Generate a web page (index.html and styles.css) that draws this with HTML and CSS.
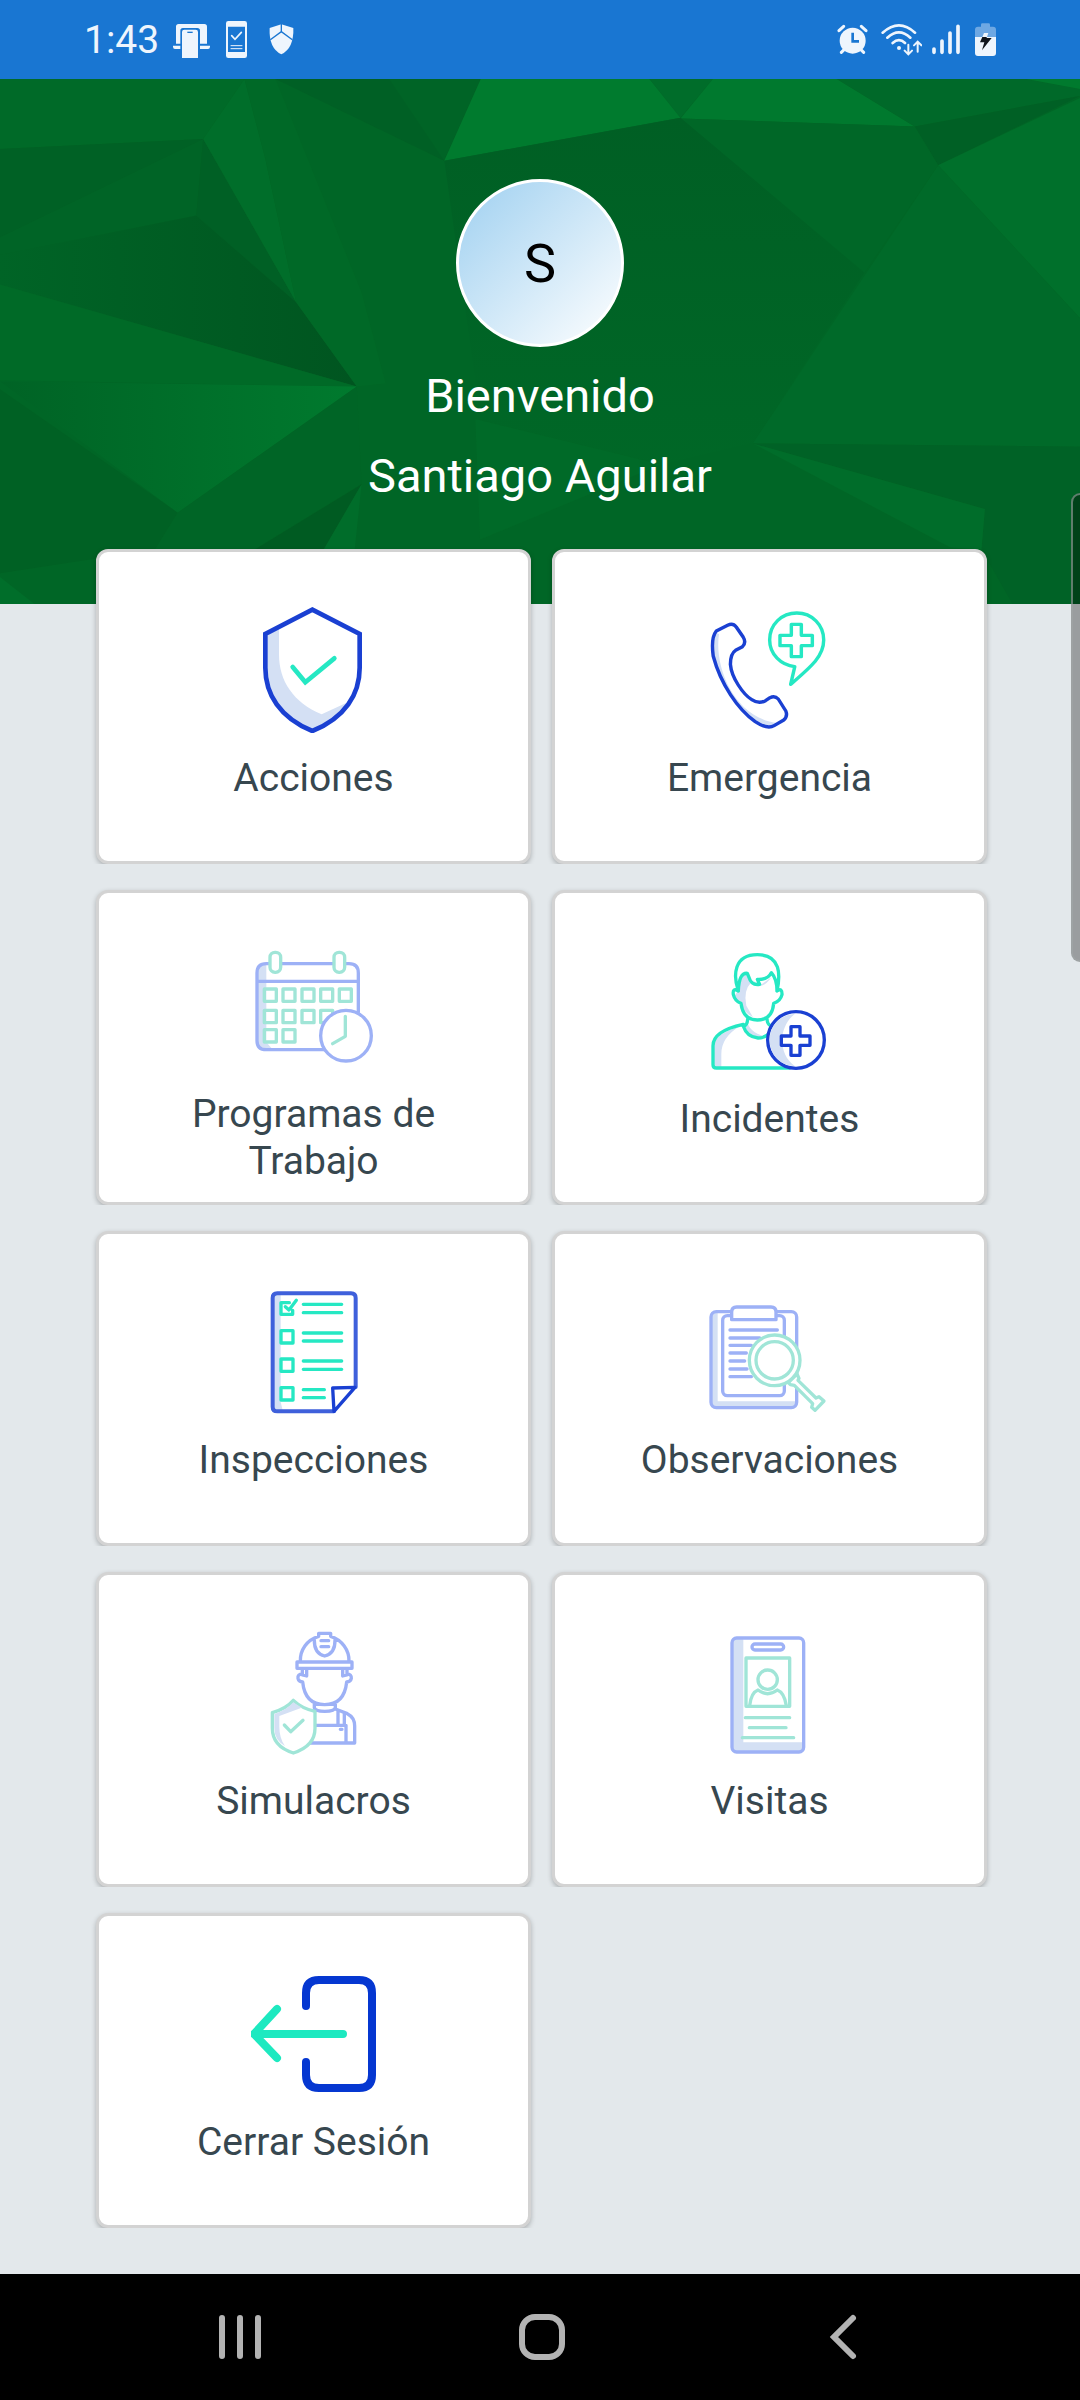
FILE: index.html
```
<!DOCTYPE html>
<html lang="es">
<head>
  <meta charset="UTF-8" />
  <meta name="viewport" content="width=device-width, initial-scale=1.0"/>
  <title>Menú principal</title>
  <link rel="stylesheet" href="styles.css">
</head>
<body>

  <div class="status-bar">
    <div class="status-left">
      <span class="time">1:43</span>
      <svg width="37" height="40" viewBox="336 60 111 120">
        <path class="fill" d="M345 131V80Q345 72 353 72H430Q438 72 438 80V131H417V92Q417 84 409 84H366Q358 84 358 92V131ZM336 137H358V147H342Q336 147 336 140ZM417 137H447V140Q447 147 441 147H417ZM363 174V96Q363 89 370 89H404Q411 89 411 96V174Z"/>
        <path class="cut" d="M379 97H395"/>
      </svg>
      <svg width="30" height="40" viewBox="495 60 90 120">
        <path class="fill" fill-rule="evenodd" d="M508 63H557Q564 63 564 70V167Q564 174 557 174H508Q501 174 501 167V70Q501 63 508 63ZM507 80V156H558V80Z"/>
        <path class="line" stroke-width="5" d="M518 107L528 118L547 97"/>
        <path class="line" stroke-width="3" d="M516 137H549M516 146H549"/>
      </svg>
      <svg width="26" height="40" viewBox="633 60 78 120">
        <path class="fill" d="M673 73L709 84Q711 145 673 163Q635 145 638 84Z"/>
        <path class="cut" d="M673 72V95M640 119L673 95L706 119"/>
      </svg>
    </div>
    <div class="status-right">
      <svg width="33" height="40" viewBox="51 60 99 120">
        <circle class="fill" cx="98" cy="122" r="39"/>
        <path class="line" stroke-width="9" d="M57 92L71 79M138 92L124 79M64 157L73 148M131 157L122 148"/>
        <path class="cut thick-cut" d="M98 98V124H117"/>
      </svg>
      <svg width="43" height="40" viewBox="177 60 129 120">
        <path class="line" stroke-width="8" d="M188 98Q237 54 285 98M202 113Q237 81 271 113M218 129Q237 112 255 129"/>
        <circle class="fill" cx="237" cy="144" r="6"/>
        <path class="line" stroke-width="6" d="M265 134V162M254 152L265 163L276 152M293 155V126M282 136L293 125L304 136"/>
      </svg>
      <svg width="30" height="40" viewBox="333 60 90 120">
        <path class="line" stroke-width="11" d="M342 147V157M366 123V157M390 99V157M414 79V157"/>
      </svg>
      <svg width="30" height="40" viewBox="450 60 90 120">
        <path class="fill dim" d="M483 80V74Q483 70 487 70H506Q510 70 510 74V80H519Q528 80 528 89V111H465V89Q465 80 474 80Z"/>
        <path class="fill" d="M465 111H528V159Q528 168 519 168H474Q465 168 465 159ZM492 99H505L501 111H487Z"/>
        <path d="M487 111H501L499 114H515L486 151L493 127H480Z" fill="#10151c"/>
      </svg>
    </div>
  </div>

  <header class="hero">
    <svg class="hero-bg" viewBox="0 200 1568 1328" preserveAspectRatio="none">
      <defs>
        <linearGradient id="glow"><stop offset="0" stop-color="#006325"/><stop offset="1" stop-color="#007a2e"/></linearGradient>
        <linearGradient id="deep"><stop offset="0" stop-color="#006426"/><stop offset="1" stop-color="#005520"/></linearGradient>
        <linearGradient id="mid" x1="0" y1="0" x2="0" y2="1"><stop offset="0" stop-color="#005f24"/><stop offset="1" stop-color="#006927"/></linearGradient>
      </defs>
      <rect x="0" y="200" width="1568" height="1328" fill="#006626"/>
      <polygon points="0,200 355,200 295,352 0,377" fill="#006a28"/>
      <polygon points="0,377 295,352 285,545 0,645" fill="#006125"/>
      <polygon points="0,600 295,352 285,545 0,645" fill="#006426"/>
      <polygon points="295,352 430,765 285,545" fill="#006025"/>
      <polygon points="0,645 285,545 430,765 518,978 0,720" fill="url(#deep)"/>
      <polygon points="0,720 518,978 0,962" fill="#006a27"/>
      <polygon points="0,965 518,978 258,1297" fill="url(#glow)"/>
      <polygon points="0,985 258,1297 225,1390 0,1450" fill="#006124"/>
      <polygon points="0,1460 50,1528 0,1528" fill="#006e2a"/>
      <polygon points="258,1297 225,1390 370,1390 525,1225 518,978" fill="#006526"/>
      <polygon points="525,1225 370,1390 470,1390" fill="#005b22"/>
      <polygon points="525,1225 470,1390 515,1390" fill="#006d2a"/>
      <polygon points="295,352 355,200 385,400 430,765" fill="#006e2a"/>
      <polygon points="355,200 400,200 525,740 560,970 518,978 430,765 385,400" fill="#006927"/>
      <polygon points="400,200 698,200 645,407" fill="#006025"/>
      <polygon points="565,200 698,200 645,407" fill="#006426"/>
      <polygon points="698,200 943,200 988,298 645,407" fill="#007b2e"/>
      <polygon points="943,200 1035,200 988,298" fill="#006d2a"/>
      <polygon points="1035,200 1215,200 1328,320 988,300" fill="#00792e"/>
      <polygon points="1215,200 1490,200 1568,225 1568,243 1328,320" fill="#006929"/>
      <polygon points="1490,200 1568,200 1568,225" fill="#007a2e"/>
      <polygon points="1328,320 1568,243 1362,418" fill="#006025"/>
      <polygon points="1362,418 1568,248 1568,805" fill="#00702b"/>
      <polygon points="988,300 1328,320 1362,418 1255,690" fill="#006727"/>
      <polygon points="645,407 988,298 1255,690 1093,1120 960,1175 697,1365 690,960" fill="url(#mid)"/>
      <polygon points="697,1365 690,1060 960,1175" fill="#006a28"/>
      <polygon points="1362,418 1568,805 1568,1130 1093,1122" fill="#006a29"/>
      <polygon points="1093,1122 1568,1130 1568,1528 1470,1528 1425,1390 1430,1288" fill="#006226"/>
      <polygon points="1093,1122 1430,1288 1425,1390 1380,1385" fill="#006d2a"/>
    </svg>
    <div class="avatar">S</div>
    <p class="greeting">Bienvenido</p>
    <h1 class="user-name">Santiago Aguilar</h1>
  </header>

  <main class="menu">
    <button class="card">
      <svg class="icon thick" viewBox="513 228 378 378">
        <path class="shade" d="M556 308L597 295V370C597 450 640 515 725 550L800 515Q770 570 697 600C600 560 556 490 556 410Z"/>
        <path class="blue" d="M697 236L839 309V410C839 490 795 560 697 600C600 560 556 490 556 410V309Z"/>
        <path class="teal" d="M638 408L676 454L763 382"/>
      </svg>
      <span class="label">Acciones</span>
    </button>

    <button class="card">
      <svg class="icon" viewBox="485 228 366 378" preserveAspectRatio="none">
        <path class="shade" d="M502 320Q512 300 520 310C505 400 560 560 690 576Q660 600 625 572C575 535 525 460 503 375Z"/>
        <path class="blue" d="M512 300L545 283Q560 275 570 288L590 318Q600 335 588 347L568 358Q553 368 553 400C556 440 590 490 615 506Q635 520 655 509L668 500Q682 493 692 504L714 540Q720 556 708 567L680 584Q660 596 625 572C575 535 525 460 503 375Q496 320 512 300Z"/>
        <path class="teal" d="M740 407C700 403 667 370 667 327C667 280 702 246 746 246C790 246 824 282 824 327C824 375 790 405 728 460Z"/>
        <path class="teal" d="M730 280H759V313H791V344H759V377H730V344H697V313H730Z"/>
      </svg>
      <span class="label">Emergencia</span>
    </button>

    <button class="card">
      <svg class="icon faded" viewBox="64 52 378 363">
        <path class="shade" d="M84 105L110 100V335L125 352H100L84 340Z"/>
        <path class="blue" d="M285 357H110Q82 357 82 330V127Q82 99 110 99H358Q386 99 386 127V245M82 152H386"/>
        <rect class="teal paper" x="121" y="65" width="32" height="60" rx="15"/>
        <rect class="teal paper" x="313" y="65" width="32" height="60" rx="15"/>
        <path class="teal" d="M104 175h36v37h-36zM160 175h36v37h-36zM217 175h36v37h-36zM273 175h36v37h-36zM329 175h36v37h-36zM104 239h36v37h-36zM160 239h36v37h-36zM217 239h36v37h-36zM273 239h36v37h-36zM104 297h36v37h-36zM160 297h36v37h-36z"/>
        <circle class="blue paper" cx="349" cy="315" r="76"/>
        <path class="teal" d="M347 257V317L309 339"/>
      </svg>
      <span class="label">Programas de Trabajo</span>
    </button>

    <button class="card">
      <svg class="icon" viewBox="52 52 378 378">
        <path class="shade" d="M145 180C150 150 165 130 170 130Q180 145 185 155Q160 180 170 225L190 260Q155 240 154 218L132 200Z"/>
        <path class="shade" d="M185 145L210 165L245 140Q225 170 205 165ZM172 270Q180 310 235 318Q190 335 163 285ZM72 340Q80 310 150 287Q95 320 95 370V410H72Z"/>
        <path class="teal" d="M146 181C130 135 132 72 203 72C275 72 272 135 262 181Q262 145 245 126Q235 148 203 146L210 161Q185 165 178 140L173 128Q148 125 146 181Q128 170 131 192Q136 212 154 218Q160 268 203 268Q248 268 252 218Q272 212 277 192Q278 170 262 181"/>
        <path class="teal" d="M174 265Q173 285 161 287Q172 320 205 322Q225 322 240 308M232 265Q233 280 242 285M161 281C110 292 70 310 70 345V402Q70 412 80 412H300"/>
        <circle class="blue paper" cx="319" cy="328" r="85"/>
        <path class="shade" d="M315 250C215 255 215 400 315 406C265 370 265 290 315 250Z"/>
        <path class="blue" d="M304 288H331V316H361V344H331V374H304V344H275V316H304Z"/>
      </svg>
      <span class="label">Incidentes</span>
    </button>

    <button class="card">
      <svg class="icon" viewBox="33 56 378 378">
        <path class="shade" d="M98 70H122V395L128 420H98Z"/>
        <path class="blue soft" d="M282 423H112Q98 423 98 409V83Q98 69 112 69H333Q347 69 347 83V350"/>
        <path class="blue" d="M345 351L278 353L282 423Z"/>
        <path class="teal" d="M148 97H123V132H158V120M136 109L147 119L169 90M123 181h36v37h-36zM123 266h36v37h-36zM123 352h36v37h-36z"/>
        <path class="teal" d="M190 102H305M190 127H305M190 188H305M190 212H305M190 272H305M190 297H305M190 358H253M190 382H253"/>
      </svg>
      <span class="label">Inspecciones</span>
    </button>

    <button class="card">
      <svg class="icon faded" viewBox="52 26 378 378">
        <path class="shade" d="M66 95H84V363H320V380H66Z"/>
        <rect class="blue" x="64" y="94" width="257" height="288" rx="16"/>
        <rect class="blue paper" x="99" y="106" width="185" height="240" rx="14"/>
        <path class="blue paper" d="M126 118V95Q126 80 141 80H244Q259 80 259 95V118Z"/>
        <path class="blue" d="M121 149H263M121 173H210M121 195H185M121 218H170M121 242H165M121 266H172M121 289H185"/>
        <circle class="teal paper" cx="255" cy="240" r="76"/>
        <circle class="teal" cx="255" cy="240" r="56"/>
        <path class="teal paper" d="M296 307L322 281L328 294L325 300L379 353L388 349L403 362L376 390L366 381L369 370L314 315L302 313Z"/>
      </svg>
      <span class="label">Observaciones</span>
    </button>

    <button class="card">
      <svg class="icon faded" viewBox="33 60 378 378">
        <path class="blue" d="M181 154C180 120 200 90 236 79V70H272V79C306 90 328 120 327 154M171 156H336V175H171ZM223 90Q222 130 254 138Q286 130 285 90M243 92H266M243 110H266"/>
        <path class="blue" d="M187 177V195L200 198V178M321 177V195L308 198V178M187 192Q172 192 174 205Q176 215 188 216Q195 284 254 284Q313 284 320 216Q332 215 334 205Q335 192 321 192M223 277V293Q225 304 254 304Q284 304 286 293V277M226 303L223 293M286 297L322 311Q344 322 344 348V399H208M227 346H318V399M294 303V346M313 312V346M301 358h5"/>
        <path class="teal paper" d="M160 271Q185 295 225 304V355C225 390 205 415 160 429C115 415 97 390 97 355V308Q140 295 160 271Z"/>
        <path class="shade" d="M160 277L185 293L118 318V350Q118 385 135 408Q103 390 103 355V312Q140 300 160 277Z"/>
        <path class="teal" d="M133 345L152 365L189 331"/>
      </svg>
      <span class="label">Simulacros</span>
    </button>

    <button class="card">
      <svg class="icon faded" viewBox="52 60 378 378">
        <path class="shade" d="M128 88H161V397H340V425H128Z"/>
        <rect class="blue" x="127" y="84" width="215" height="342" rx="14"/>
        <rect class="blue" x="187" y="102" width="95" height="18" rx="9"/>
        <path class="teal" d="M169 144H300V289H169ZM167 323H300M179 353H289M158 383H312"/>
        <circle class="teal" cx="234" cy="209" r="29"/>
        <path class="teal" d="M180 287Q184 248 205 240Q234 262 263 240Q284 248 290 287"/>
      </svg>
      <span class="label">Visitas</span>
    </button>

    <button class="card">
      <svg class="icon heavy" viewBox="1 0 126 126">
        <path class="blue" d="M56 35V22Q56 9 69 9H109Q122 9 122 22V104Q122 117 109 117H69Q56 117 56 104V91"/>
        <path class="teal" d="M93 63H4M27 38L4 63L27 87"/>
      </svg>
      <span class="label">Cerrar Sesión</span>
    </button>
  </main>

  <nav class="nav-bar">
    <button class="nav-btn" aria-label="Recientes">
      <svg width="64" height="64" viewBox="0 0 64 64"><path d="M14 13V51M32 13V51M50 13V51"/></svg>
    </button>
    <button class="nav-btn" aria-label="Inicio">
      <svg width="64" height="64" viewBox="0 0 64 64"><rect x="12" y="12" width="40" height="40" rx="13"/></svg>
    </button>
    <button class="nav-btn" aria-label="Atrás">
      <svg width="64" height="64" viewBox="0 0 64 64"><path d="M41 13L22 32L41 51"/></svg>
    </button>
  </nav>

  <div class="edge-handle"></div>

</body>
</html>
```
FILE: styles.css
```
* {
  box-sizing: border-box;
}

body {
  position: relative;
  display: flex;
  flex-direction: column;
  min-height: 100vh;
  margin: 0;
  background-color: #e3e8eb;
  font-family: Roboto, sans-serif;
  overflow-x: hidden;
}

button {
  font-family: inherit;
  cursor: pointer;
}

/* Status bar */
.status-bar {
  display: flex;
  justify-content: space-between;
  align-items: center;
  height: 79px;
  padding: 0 80px 0 84px;
  background-color: #1976d2;
  color: #eef5fd;
}

.status-left,
.status-right {
  display: flex;
  align-items: center;
}

.status-left {
  gap: 14px;
}

.status-right {
  gap: 9px;
}

.time {
  font-size: 39px;
  line-height: 48px;
}

.fill {
  fill: #eef5fd;
}

.dim {
  opacity: 0.4;
}

.line {
  fill: none;
  stroke: #eef5fd;
  stroke-linecap: round;
}

.cut {
  fill: none;
  stroke: #1976d2;
  stroke-width: 4;
}

.thick-cut {
  stroke-width: 8;
}

/* Header */
.hero {
  position: relative;
  display: flex;
  flex-direction: column;
  align-items: center;
  padding: 100px 0 88px;
  color: #fff;
}

.hero-bg {
  position: absolute;
  inset: 0;
  width: 100%;
  height: 100%;
}

.avatar {
  position: relative;
  display: flex;
  align-items: center;
  justify-content: center;
  width: 168px;
  height: 168px;
  border: 3px solid #fff;
  border-radius: 50%;
  background: linear-gradient(135deg, #9fd0f0, #fff);
  color: #000;
  font-size: 54px;
}

.greeting,
.user-name {
  position: relative;
  margin: 0;
  font-size: 47px;
  font-weight: 400;
  line-height: 80px;
}

.greeting {
  margin-top: 9px;
}

/* Menu */
.menu {
  position: relative;
  flex: 1;
  display: grid;
  grid-template-columns: 1fr 1fr;
  grid-auto-rows: 315px;
  gap: 26px 21px;
  margin-top: -55px;
  padding: 0 93px 45px 96px;
}

.card {
  display: flex;
  flex-direction: column;
  align-items: center;
  padding: 55px 48px 17px;
  border: 3px solid #d3d3d3;
  border-radius: 12px;
  background-color: #fff;
  box-shadow: 0 2px 5px rgba(0, 0, 0, 0.25);
  clip-path: inset(-6px -6px 0 -6px);
}

.label {
  margin-top: 22px;
  color: #37474f;
  font-size: 39px;
  line-height: 47px;
  text-align: center;
}

.icon {
  --blue: #1a40d2;
  --teal: #25e8c3;
  --shade: #d4e0f4;
  width: 126px;
  height: 126px;
  min-height: 0;
  fill: none;
  stroke-width: 10;
  stroke-linecap: round;
  stroke-linejoin: round;
}

.faded {
  --blue: #9db1f6;
  --teal: #a0e5d7;
}

.thick {
  stroke-width: 14;
  stroke-linejoin: miter;
}

.heavy {
  --blue: #0537d1;
  --teal: #1de9c0;
  stroke-width: 8;
}

.blue {
  stroke: var(--blue);
}

.soft {
  stroke: #3f60db;
  stroke-width: 12;
}

.teal {
  stroke: var(--teal);
}

.shade {
  fill: var(--shade);
}

.paper {
  fill: #fff;
}

/* Bottom navigation */
.nav-bar {
  display: flex;
  justify-content: space-between;
  align-items: center;
  height: 126px;
  padding: 0 204px 0 208px;
  background-color: #000;
}

.nav-btn {
  display: flex;
  padding: 0;
  border: none;
  background: none;
}

.nav-btn svg {
  fill: none;
  stroke: #b3b3b3;
  stroke-width: 6;
  stroke-linecap: round;
}

/* Edge panel handle */
.edge-handle {
  position: absolute;
  top: 493px;
  right: 0;
  width: 9px;
  height: 469px;
  border: 2px solid rgba(160, 165, 165, 0.6);
  border-right: none;
  border-radius: 9px 0 0 9px;
  background-color: rgba(0, 0, 0, 0.32);
}
```
